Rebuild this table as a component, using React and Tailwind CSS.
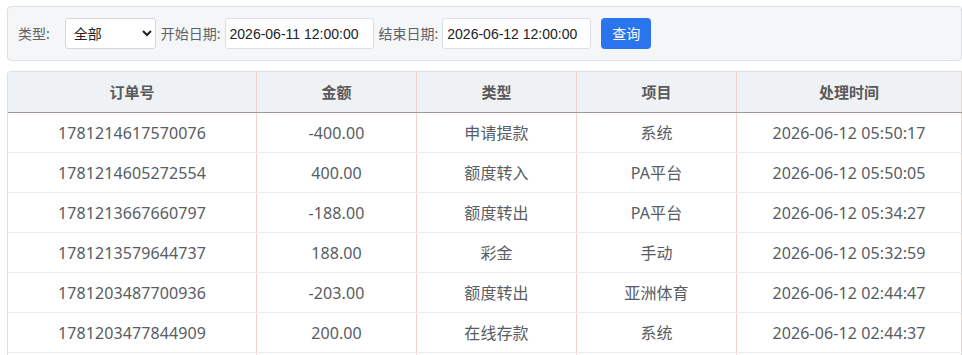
import React from "react";

const rows = [
  ["1781214617570076", "-400.00", "申请提款", "系统", "2026-06-12 05:50:17"],
  ["1781214605272554", "400.00", "额度转入", "PA平台", "2026-06-12 05:50:05"],
  ["1781213667660797", "-188.00", "额度转出", "PA平台", "2026-06-12 05:34:27"],
  ["1781213579644737", "188.00", "彩金", "手动", "2026-06-12 05:32:59"],
  ["1781203487700936", "-203.00", "额度转出", "亚洲体育", "2026-06-12 02:44:47"],
  ["1781203477844909", "200.00", "在线存款", "系统", "2026-06-12 02:44:37"],
];

const heads = ["订单号", "金额", "类型", "项目", "处理时间"];

export default function App() {
  return (
    <div
      className="pl-[7px] pt-[6px] w-[962px] h-[355px] overflow-hidden bg-white"
      style={{ fontFamily: '"Noto Sans", "Noto Sans CJK SC", sans-serif' }}
    >
      <div className="w-[955px] flex items-center bg-[#f5f6f8] border border-[#dcdfe5] rounded-[4px] pl-[10px] py-[11px] text-[14px] text-[#606266]">
        <span className="mr-[15px]">类型:</span>
        <select
          defaultValue="全部"
          className="w-[91px] h-[31px] bg-white border border-[#d4d7dc] rounded-[3px] pl-[4px] text-[14px] text-[#222] outline-none"
        >
          <option>全部</option>
        </select>
        <span className="ml-[5px] mr-[4px]">开始日期:</span>
        <input
          readOnly
          value="2026-06-11 12:00:00"
          className="w-[149px] h-[31px] bg-white border border-[#dcdfe5] rounded-[3px] px-[4px] text-[14px] text-[#222]"
          style={{ fontFamily: '"Liberation Sans", Arial, sans-serif' }}
        />
        <span className="ml-[5px] mr-[4px]">结束日期:</span>
        <input
          readOnly
          value="2026-06-12 12:00:00"
          className="w-[149px] h-[31px] bg-white border border-[#dcdfe5] rounded-[3px] px-[4px] text-[14px] text-[#222]"
          style={{ fontFamily: '"Liberation Sans", Arial, sans-serif' }}
        />
        <button className="ml-[10px] w-[50px] h-[31px] bg-[#2a74ee] text-white rounded-[4px] text-[14px]">
          查询
        </button>
      </div>

      <div className="mt-[10px] w-[955px] border-l border-t border-[#dcdfe5] rounded-tl-[4px] overflow-hidden">
        <div className="grid grid-cols-[249px_160px_160px_160px_225px] bg-[#eff2f5] border-b border-[#a39696] h-[41px]">
          {heads.map((h) => (
            <div
              key={h}
              className="border-r border-[#f6cfcf] flex items-center justify-center font-bold text-[15px] text-[#5a5a5a]"
            >
              {h}
            </div>
          ))}
        </div>
        {rows.map((r, i) => (
          <div
            key={i}
            className="grid grid-cols-[249px_160px_160px_160px_225px] h-[40px] border-b border-[#ebedf0]"
          >
            {r.map((c, j) => (
              <div
                key={j}
                className="border-r border-[#f6cfcf] flex items-center justify-center text-[16px] text-[#585c63] tracking-[0.1px]"
              >
                {c}
              </div>
            ))}
          </div>
        ))}
        <div className="grid grid-cols-[249px_160px_160px_160px_225px] h-[40px]">
          {heads.map((h) => (
            <div key={h} className="border-r border-[#f6cfcf]" />
          ))}
        </div>
      </div>
    </div>
  );
}
